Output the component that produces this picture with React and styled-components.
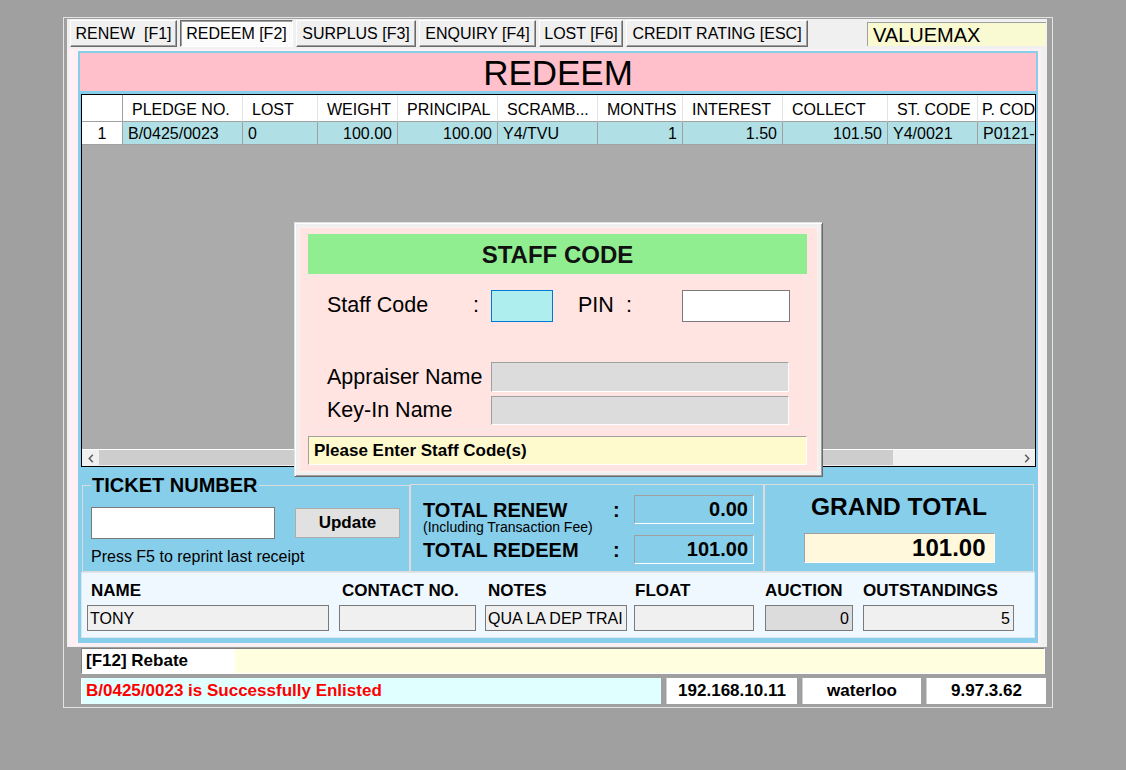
import React from 'react';
import styled, { createGlobalStyle } from 'styled-components';

const GlobalStyle = createGlobalStyle`
  html, body { margin: 0; padding: 0; }
  body {
    background: #a0a0a0;
    font-family: "Liberation Sans", Arial, sans-serif;
    color: #000;
    width: 1126px;
    height: 770px;
    overflow: hidden;
  }
  * { box-sizing: border-box; }
`;

const Page = styled.div`
  padding: 17px 0 0 63px;
`;

const Window = styled.div`
  position: relative;
  width: 990px;
  height: 691px;
  border: 1px solid #e3e3e3;
  background: #a0a0a0;
  padding: 1px 5px 2px 3px;
  display: flex;
  flex-direction: column;
`;

const TopArea = styled.div`
  background: #f0f0f0;
  height: 628px;
  display: flex;
  flex-direction: column;
`;

const TabsRow = styled.div`
  display: flex;
  align-items: flex-start;
  gap: 3px;
  height: 27px;
  margin-top: 1px;
  padding: 0 1px 0 3px;
`;

const Tab = styled.div`
  width: ${p => p.$w}px;
  height: 27px;
  display: flex;
  align-items: center;
  justify-content: center;
  font-size: 16px;
  white-space: pre;
  background: ${p => (p.$active ? '#fbfbfb' : '#f0f0f0')};
  border: 1px solid;
  border-color: ${p => (p.$active ? '#696969 #ffffff #ffffff #696969' : '#ffffff #696969 #696969 #ffffff')};
  box-shadow: ${p => (p.$active ? 'inset 1px 1px #a0a0a0' : 'inset -1px -1px #a0a0a0')};
`;

const BrandBox = styled.div`
  margin-left: auto;
  margin-top: 2px;
  width: 179px;
  height: 24px;
  background: #fafad2;
  border-top: 1px solid #a0a0a0;
  border-left: 1px solid #a0a0a0;
  font-size: 20px;
  line-height: 24px;
  padding-left: 5px;
`;

const Blush = styled.div`
  margin: 2px 6px 1px 2px;
  height: 597px;
  background: #fff0f5;
  padding: 2px 3px 3px 9px;
`;

const Panel = styled.div`
  height: 592px;
  border: 2px solid #87ceeb;
  background: #87ceeb;
  display: flex;
  flex-direction: column;
`;

const TitleBar = styled.div`
  height: 38px;
  background: #ffc0cb;
  font-size: 35px;
  line-height: 40px;
  text-align: center;
`;

const Grid = styled.div`
  margin: 3px 0 0 1px;
  height: 373px;
  border: 1px solid #000;
  background: #ababab;
  display: flex;
  flex-direction: column;
  overflow: hidden;
`;

const GridRow = styled.div`
  display: grid;
  grid-template-columns: 41px 120px 75px 80px 100px 100px 85px 100px 105px 90px 100px;
  height: ${p => p.$h}px;
  flex: none;
`;

const HeadCell = styled.div`
  background: #fff;
  border-right: 1px solid ${p => (p.$rh ? '#a0a0a0' : '#e3e3e3')};
  border-bottom: 1px solid #a0a0a0;
  padding: 2px 0 0 ${p => p.$pl ?? 9}px;
  font-size: 16px;
  line-height: 25px;
  white-space: nowrap;
  overflow: hidden;
`;

const DataCell = styled.div`
  background: ${p => (p.$rh ? '#ffffff' : '#b0e0e6')};
  border-right: 1px solid #a0a0a0;
  border-bottom: 1px solid #a0a0a0;
  text-align: ${p => p.$align || 'left'};
  padding: 1px 5px 0;
  font-size: 16px;
  line-height: 22px;
  white-space: nowrap;
  overflow: hidden;
`;

const GridFill = styled.div`
  flex: 1;
`;

const HScroll = styled.div`
  height: 17px;
  flex: none;
  display: flex;
  background: #f0f0f0;
  border-top: 1px solid #ffffff;
`;

const ScrollArrow = styled.div`
  width: 17px;
  display: flex;
  align-items: center;
  justify-content: center;
`;

const Thumb = styled.div`
  width: 794px;
  margin: 0 0 1px;
  background: #cdcdcd;
`;

const Track = styled.div`
  flex: 1;
`;

const TotalsRow = styled.div`
  height: 105px;
  padding: 9px 2px 0;
  display: flex;
  flex: none;
`;

const GroupBox = styled.fieldset`
  margin: ${p => p.$mt || 0}px 0 0 0;
  width: ${p => p.$w}px;
  height: ${p => p.$h}px;
  min-width: 0;
  border: 1px solid #dcdcdc;
  padding: ${p => p.$pad};
`;

const GroupTitle = styled.legend`
  font-size: 20px;
  font-weight: bold;
  line-height: 18px;
  height: 18px;
  padding: 0 1px;
`;

const TicketLine = styled.div`
  display: flex;
  align-items: center;
  gap: 20px;
`;

const TicketInput = styled.div`
  width: 184px;
  height: 32px;
  background: #fff;
  border: 1px solid #7a7a7a;
`;

const UpdateButton = styled.div`
  width: 105px;
  height: 30px;
  background: #e1e1e1;
  border: 1px solid #adadad;
  font-size: 17px;
  font-weight: bold;
  display: flex;
  align-items: center;
  justify-content: center;
`;

const Hint = styled.div`
  margin-top: 9px;
  font-size: 16px;
  line-height: 18px;
`;

const TotalsGrid = styled.div`
  display: grid;
  grid-template-columns: 190px 21px 120px;
  row-gap: 1px;
  align-items: start;
`;

const TotalLabel = styled.div`
  display: flex;
  flex-direction: column;
`;

const TotalTitle = styled.div`
  font-size: 20px;
  font-weight: bold;
  line-height: 22px;
  margin-top: 4px;
  white-space: nowrap;
`;

const TotalSub = styled.div`
  font-size: 14px;
  line-height: 13px;
  white-space: nowrap;
`;

const ValueBox = styled.div`
  width: ${p => p.$w}px;
  height: ${p => p.$h}px;
  margin-top: ${p => p.$mt || 0}px;
  border: 1px solid;
  border-color: #a0a0a0 #ffffff #ffffff #a0a0a0;
  background: ${p => p.$bg};
  font-size: ${p => p.$fs}px;
  font-weight: bold;
  text-align: right;
  padding-right: ${p => p.$pr}px;
  line-height: ${p => p.$h - 2}px;
`;

const GrandInner = styled.div`
  display: flex;
  flex-direction: column;
  align-items: center;
`;

const GrandTitle = styled.div`
  font-size: 24.5px;
  font-weight: bold;
  line-height: 28px;
`;

const Customer = styled.div`
  height: 66px;
  flex: none;
  margin: 0 1px;
  background: #f0f8ff;
  border: 1px solid #dbe6ef;
  padding: 7px 0 0 5px;
  display: flex;
`;

const CustCol = styled.div`
  width: ${p => p.$w}px;
  margin-left: ${p => p.$ml || 0}px;
  display: flex;
  flex-direction: column;
`;

const CustLabel = styled.div`
  font-size: 17px;
  font-weight: bold;
  line-height: 21px;
  padding-left: ${p => p.$pl || 0}px;
  white-space: nowrap;
`;

const CustField = styled.div`
  margin-top: 4px;
  height: 26px;
  background: ${p => p.$bg || '#f0f0f0'};
  border: 1px solid #7a7a7a;
  font-size: 16px;
  line-height: 25px;
  padding: 0 3px 0 2px;
  text-align: ${p => p.$align || 'left'};
  white-space: nowrap;
  overflow: hidden;
`;

const BottomArea = styled.div`
  display: flex;
  flex-direction: column;
  padding-left: 14px;
`;

const RebateRow = styled.div`
  margin-top: 1px;
  width: 964px;
  height: 26px;
  display: flex;
  border: 1px solid;
  border-color: #808080 #ffffff #ffffff #808080;
`;

const RebateLabel = styled.div`
  width: 153px;
  background: #fff;
  font-size: 17px;
  font-weight: bold;
  line-height: 24px;
  padding-left: 4px;
`;

const RebateFill = styled.div`
  flex: 1;
  background: #ffffe0;
`;

const StatusRow = styled.div`
  margin-top: 4px;
  width: 965px;
  height: 26px;
  display: flex;
  gap: 5px;
`;

const StatusBox = styled.div`
  width: ${p => p.$w}px;
  background: ${p => p.$bg || '#ffffff'};
  color: ${p => p.$color || '#000'};
  font-size: 17px;
  font-weight: bold;
  line-height: 26px;
  text-align: ${p => p.$align || 'center'};
  padding-left: ${p => p.$pl || 0}px;
  border-left: 1px solid ${p => p.$edge || '#d0d0d0'};
  white-space: nowrap;
`;

const Dialog = styled.div`
  position: absolute;
  left: 230px;
  top: 204px;
  width: 529px;
  height: 255px;
  border: 1px solid;
  border-color: #e3e3e3 #696969 #696969 #e3e3e3;
  box-shadow: inset 1px 1px #ffffff, inset -1px -1px #a0a0a0;
  background: #f0f0f0;
  padding: 4px;
`;

const DialogInner = styled.div`
  height: 100%;
  background: #ffe4e1;
  border: 1px solid #fbf1f0;
  padding: 6px 10px 6px 8px;
  display: flex;
  flex-direction: column;
`;

const DlgTitle = styled.div`
  height: 40px;
  background: #90ee90;
  font-size: 24px;
  font-weight: bold;
  line-height: 41px;
  text-align: center;
  color: #111;
`;

const DlgBody = styled.div`
  margin-top: 1px;
  height: 155px;
  border: 1px solid #f2e9e8;
  padding: 14px 0 0 18px;
`;

const DlgRow = styled.div`
  display: flex;
  align-items: center;
  margin-top: ${p => p.$mt || 0}px;
`;

const DlgText = styled.div`
  width: ${p => p.$w}px;
  margin-left: ${p => p.$ml || 0}px;
  font-size: 21.5px;
  white-space: nowrap;
  transform: translateY(${p => (p.$up ? -1 : 0)}px);
`;

const DlgInput = styled.div`
  width: ${p => p.$w}px;
  height: ${p => p.$h}px;
  background: ${p => p.$bg};
  border: 1px solid;
  border-color: ${p => p.$bc};
`;

const DlgStatus = styled.div`
  margin-top: 6px;
  height: 29px;
  background: #fffacd;
  border: 1px solid;
  border-color: #a0a0a0 #ffffff #ffffff #a0a0a0;
  font-size: 17px;
  font-weight: bold;
  line-height: 28px;
  padding-left: 5px;
`;

const Chevron = ({ dir }) => (
  <svg width="6" height="9" viewBox="0 0 6 9">
    <path
      d={dir === 'left' ? 'M4.8 0.8 L1.3 4.5 L4.8 8.2' : 'M1.2 0.8 L4.7 4.5 L1.2 8.2'}
      fill="none"
      stroke="#606060"
      strokeWidth="1.6"
    />
  </svg>
);

const tabs = [
  { label: 'RENEW  [F1]', w: 107 },
  { label: 'REDEEM [F2]', w: 113, active: true },
  { label: 'SURPLUS [F3]', w: 120 },
  { label: 'ENQUIRY [F4]', w: 117 },
  { label: 'LOST [F6]', w: 84 },
  { label: 'CREDIT RATING [ESC]', w: 182 },
];

const headers = [
  { t: '', rh: true },
  { t: 'PLEDGE NO.' },
  { t: 'LOST' },
  { t: 'WEIGHT' },
  { t: 'PRINCIPAL' },
  { t: 'SCRAMB...' },
  { t: 'MONTHS' },
  { t: 'INTEREST' },
  { t: 'COLLECT' },
  { t: 'ST. CODE' },
  { t: 'P. CODE', pl: 4 },
];

const row = [
  { t: '1', rh: true, a: 'center' },
  { t: 'B/0425/0023' },
  { t: '0' },
  { t: '100.00', a: 'right' },
  { t: '100.00', a: 'right' },
  { t: 'Y4/TVU' },
  { t: '1', a: 'right' },
  { t: '1.50', a: 'right' },
  { t: '101.50', a: 'right' },
  { t: 'Y4/0021' },
  { t: 'P0121-0001' },
];

const customer = [
  { label: 'NAME', value: 'TONY', w: 242, ml: 0, pl: 4 },
  { label: 'CONTACT NO.', value: '', w: 137, ml: 10, pl: 3 },
  { label: 'NOTES', value: 'QUA LA DEP TRAI', w: 142, ml: 9, pl: 3 },
  { label: 'FLOAT', value: '', w: 120, ml: 7, pl: 1 },
  { label: 'AUCTION', value: '0', w: 88, ml: 11, pl: 0, bg: '#dcdcdc', align: 'right' },
  { label: 'OUTSTANDINGS', value: '5', w: 151, ml: 10, pl: 0, align: 'right' },
];

export default function App() {
  return (
    <Page>
      <GlobalStyle />
      <Window>
        <TopArea>
          <TabsRow>
            {tabs.map(t => (
              <Tab key={t.label} $w={t.w} $active={t.active}>
                {t.label}
              </Tab>
            ))}
            <BrandBox>VALUEMAX</BrandBox>
          </TabsRow>
          <Blush>
            <Panel>
              <TitleBar>REDEEM</TitleBar>
              <Grid>
                <GridRow $h={27}>
                  {headers.map((h, i) => (
                    <HeadCell key={i} $rh={h.rh} $pl={h.pl}>
                      {h.t}
                    </HeadCell>
                  ))}
                </GridRow>
                <GridRow $h={23}>
                  {row.map((c, i) => (
                    <DataCell key={i} $rh={c.rh} $align={c.a}>
                      {c.t}
                    </DataCell>
                  ))}
                </GridRow>
                <GridFill />
                <HScroll>
                  <ScrollArrow>
                    <Chevron dir="left" />
                  </ScrollArrow>
                  <Thumb />
                  <Track />
                  <ScrollArrow>
                    <Chevron dir="right" />
                  </ScrollArrow>
                </HScroll>
              </Grid>
              <TotalsRow>
                <GroupBox $w={328} $h={96} $pad="13px 8px 0 8px">
                  <GroupTitle>TICKET NUMBER</GroupTitle>
                  <TicketLine>
                    <TicketInput />
                    <UpdateButton>Update</UpdateButton>
                  </TicketLine>
                  <Hint>Press F5 to reprint last receipt</Hint>
                </GroupBox>
                <GroupBox $w={354} $h={88} $mt={8} $pad="10px 0 0 12px">
                  <TotalsGrid>
                    <TotalLabel>
                      <TotalTitle>TOTAL RENEW</TotalTitle>
                      <TotalSub>(Including Transaction Fee)</TotalSub>
                    </TotalLabel>
                    <TotalTitle>:</TotalTitle>
                    <ValueBox $w={120} $h={29} $bg="transparent" $fs={20} $pr={5}>
                      0.00
                    </ValueBox>
                    <TotalLabel>
                      <TotalTitle>TOTAL REDEEM</TotalTitle>
                    </TotalLabel>
                    <TotalTitle>:</TotalTitle>
                    <ValueBox $w={120} $h={29} $bg="transparent" $fs={20} $pr={5}>
                      101.00
                    </ValueBox>
                  </TotalsGrid>
                </GroupBox>
                <GroupBox $w={270} $h={88} $mt={8} $pad="8px 0 0 0">
                  <GrandInner>
                    <GrandTitle>GRAND TOTAL</GrandTitle>
                    <ValueBox $w={191} $h={30} $mt={12} $bg="#fff8dc" $fs={24} $pr={8}>
                      101.00
                    </ValueBox>
                  </GrandInner>
                </GroupBox>
              </TotalsRow>
              <Customer>
                {customer.map(c => (
                  <CustCol key={c.label} $w={c.w} $ml={c.ml}>
                    <CustLabel $pl={c.pl}>{c.label}</CustLabel>
                    <CustField $bg={c.bg} $align={c.align}>
                      {c.value}
                    </CustField>
                  </CustCol>
                ))}
              </Customer>
            </Panel>
          </Blush>
        </TopArea>
        <BottomArea>
          <RebateRow>
            <RebateLabel>[F12] Rebate</RebateLabel>
            <RebateFill />
          </RebateRow>
          <StatusRow>
            <StatusBox $w={580} $bg="#e0ffff" $color="#ff0000" $align="left" $pl={4} $edge="#ffffff">
              B/0425/0023 is Successfully Enlisted
            </StatusBox>
            <StatusBox $w={131}>192.168.10.11</StatusBox>
            <StatusBox $w={119}>waterloo</StatusBox>
            <StatusBox $w={120}>9.97.3.62</StatusBox>
          </StatusRow>
        </BottomArea>
        <Dialog>
          <DialogInner>
            <DlgTitle>STAFF CODE</DlgTitle>
            <DlgBody>
              <DlgRow>
                <DlgText $w={146} $up>Staff Code</DlgText>
                <DlgText $w={18} $up>:</DlgText>
                <DlgInput $w={62} $h={32} $bg="#afeeee" $bc="#0078d7" />
                <DlgText $w={48} $ml={25} $up>PIN</DlgText>
                <DlgText $w={56} $up>:</DlgText>
                <DlgInput $w={108} $h={32} $bg="#ffffff" $bc="#7a7a7a" />
              </DlgRow>
              <DlgRow $mt={40}>
                <DlgText $w={164}>Appraiser Name</DlgText>
                <DlgInput $w={298} $h={30} $bg="#dcdcdc" $bc="#a0a0a0 #ffffff #ffffff #a0a0a0" />
              </DlgRow>
              <DlgRow $mt={4}>
                <DlgText $w={164}>Key-In Name</DlgText>
                <DlgInput $w={298} $h={29} $bg="#dcdcdc" $bc="#a0a0a0 #ffffff #ffffff #a0a0a0" />
              </DlgRow>
            </DlgBody>
            <DlgStatus>Please Enter Staff Code(s)</DlgStatus>
          </DialogInner>
        </Dialog>
      </Window>
    </Page>
  );
}
